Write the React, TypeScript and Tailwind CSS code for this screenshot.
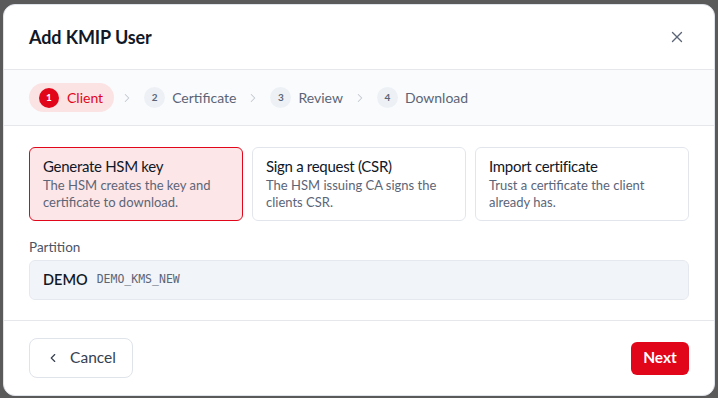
import { X, ChevronRight, ChevronLeft } from "lucide-react";

const steps = [
  { n: 1, label: "Client" },
  { n: 2, label: "Certificate" },
  { n: 3, label: "Review" },
  { n: 4, label: "Download" },
];

const options = [
  { title: "Generate HSM key", desc: "The HSM creates the key and certificate to download." },
  { title: "Sign a request (CSR)", desc: "The HSM issuing CA signs the clients CSR." },
  { title: "Import certificate", desc: "Trust a certificate the client already has." },
];

function Step({ n, label, active }: { n: number; label: string; active: boolean }) {
  if (active) {
    return (
      <div className="flex h-[29px] items-center gap-[8px] rounded-full bg-[#fbe3e4] pl-[10px] pr-[11px]">
        <span className="flex h-5 w-5 items-center justify-center rounded-full bg-[#e1061a] text-[10px] font-bold text-white">
          {n}
        </span>
        <span className="text-[14px] text-[#e1061a]">{label}</span>
      </div>
    );
  }
  return (
    <div className="flex h-[29px] items-center gap-[7px] px-[4px]">
      <span className="flex h-[21px] w-[21px] items-center justify-center rounded-full bg-[#edf1f6] text-[10px] font-bold text-[#5b6577]">
        {n}
      </span>
      <span className="text-[14px] text-[#5b6577]">{label}</span>
    </div>
  );
}

export default function App() {
  return (
    <div
      className="h-[398px] w-[718px] bg-[#5a5a5a] pb-[2px] pl-[3px] pr-[3px] pt-[4px]"
      style={{ fontFamily: "Lato, sans-serif" }}
    >
      <div className="flex h-full flex-col overflow-hidden rounded-[12px] border border-[#dfe3ea] bg-white">
        <header className="flex h-[64px] shrink-0 items-center justify-between pl-[25px] pr-[28px]">
          <h1 className="text-[18px] font-bold tracking-[-0.1px] text-[#111827]">Add KMIP User</h1>
          <X className="h-[18px] w-[18px] text-[#5b6577]" strokeWidth={1.8} />
        </header>
        <nav className="flex h-[57px] shrink-0 items-center gap-[6px] border-y border-[#e5e7eb] bg-[#fafbfc] pl-[25px]">
          {steps.map((s, i) => (
            <div key={s.n} className="flex items-center gap-[6px]">
              {i > 0 && <ChevronRight className="h-[14px] w-[14px] text-[#c3c8d0]" strokeWidth={1.8} />}
              <Step n={s.n} label={s.label} active={i === 0} />
            </div>
          ))}
        </nav>
        <main className="flex flex-1 flex-col px-[25px] pt-[21px]">
          <div className="grid grid-cols-3 gap-[9px]">
            {options.map((o, i) => (
              <div
                key={o.title}
                className={
                  i === 0
                    ? "h-[74px] rounded-[6px] border border-[#e1061a] bg-[#fde6e7] px-[13px] pt-[8px]"
                    : "h-[74px] rounded-[6px] border border-[#e2e6ec] bg-white px-[13px] pt-[8px]"
                }
              >
                <div className="text-[15px] leading-[20px] tracking-[-0.3px] text-[#111827]">{o.title}</div>
                <div className="mt-[1px] text-[13px] leading-[17px] text-[#5b6577]">{o.desc}</div>
              </div>
            ))}
          </div>
          <div className="mt-[17px] text-[13.5px] leading-[18px] text-[#4b5565]">Partition</div>
          <div className="mt-[4px] flex h-[40px] items-center gap-[9px] rounded-[6px] border border-[#e5e9ef] bg-[#f1f4f8] px-[13px]">
            <span className="text-[14.5px] font-semibold text-[#111827]">DEMO</span>
            <span className="text-[11.5px] text-[#5b6577]" style={{ fontFamily: '"DejaVu Sans Mono", monospace' }}>
              DEMO_KMS_NEW
            </span>
          </div>
        </main>
        <footer className="flex h-[75px] shrink-0 items-center justify-between border-t border-[#e5e7eb] px-[25px]">
          <button className="flex h-[40px] w-[104px] items-center justify-center gap-[10px] rounded-[8px] border border-[#dfe3ea] bg-white text-[15.5px] text-[#374151]">
            <ChevronLeft className="h-[14px] w-[14px]" strokeWidth={2} />
            Cancel
          </button>
          <button className="h-[33px] w-[58px] rounded-[6px] bg-[#e1061a] text-[15.5px] font-bold text-white">Next</button>
        </footer>
      </div>
    </div>
  );
}
